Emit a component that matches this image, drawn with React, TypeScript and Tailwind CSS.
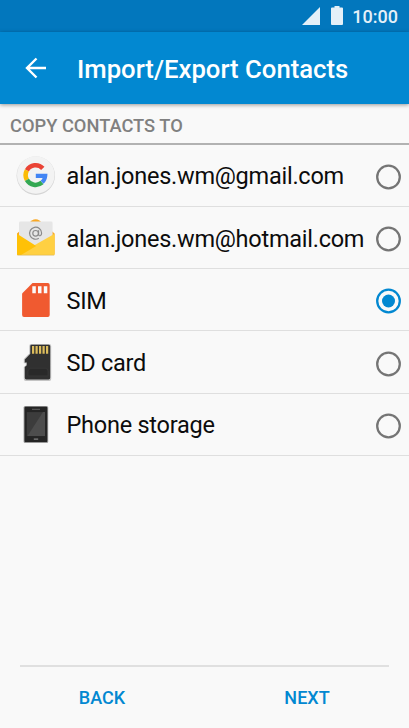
import { useState } from "react";

function GoogleIcon() {
  return (
    <svg viewBox="0 -0.5 40 40" className="size-10">
      <circle cx="19.8" cy="20.2" r="19.2" fill="#d4d4d4" />
      <circle cx="19.8" cy="19.5" r="18.8" fill="#f3f3f3" />
      <g fill="none" strokeWidth="4.6">
        <path d="M10.9 14.8A10 10 0 0 1 26.8 12.8" stroke="#ea4335" />
        <path d="M10.9 24.4A10 10 0 0 1 10.9 14.8" stroke="#fbbc05" />
        <path d="M26 27.1A10 10 0 0 1 10.9 24.4" stroke="#34a853" />
        <path d="M19.8 20.4H29.2A9.6 9.6 0 0 1 26 26.8" stroke="#4285f4" strokeWidth="4.2" />
      </g>
    </svg>
  );
}

function EmailIcon() {
  return (
    <svg viewBox="0 -0.5 40 40" className="size-10">
      <path d="M1 15L15.8 2Q19.8 -0.4 23.4 2L38.6 15V36H1Z" fill="#f9a825" />
      <path d="M3 4.4Q3 3 4.4 3H35.2Q36.6 3 36.6 4.4V27H3Z" fill="#e6e6e6" />
      <g fill="none" stroke="#8a8a8a" strokeWidth="1.2">
        <circle cx="19.6" cy="14.8" r="2.8" />
        <path d="M22.6 11.8V16.2Q23 17.8 24.6 17Q25.6 16.2 25.6 14.6A6 6 0 1 0 22.8 19.8" />
      </g>
      <path d="M38.6 15.2L1.4 36.6H37.4Q38.6 36.6 38.6 35.4Z" fill="#ffd042" />
      <path d="M1 15.2L20.2 27.6L5 36.6H2Q1 36.6 1 35.4Z" fill="#ffc107" />
      <path d="M1.4 36.7H38.2" stroke="#d9b24c" strokeWidth=".6" />
    </svg>
  );
}

function SimIcon() {
  return (
    <svg viewBox="0 0 40 40" className="size-10">
      <path
        d="M16.5 3H31.8Q33.7 3 33.7 4.9V35.1Q33.7 37 31.8 37H8Q6.1 37 6.1 35.1V13.4Z"
        fill="#f05a30"
      />
      <path d="M16.3 6.3h3.5v7h-3.5zM22 6.3h3.5v7H22zM27.8 6.3h3.5v7h-3.5z" fill="#fafafa" />
    </svg>
  );
}

function SdCardIcon() {
  return (
    <svg viewBox="0 -0.9 40 40" className="size-10">
      <path
        d="M15 1H33.2Q35.2 1 35.2 3V36Q35.2 38 33.2 38H9.8Q7.8 38 7.8 36V24L9.8 22.4V20.4H7.8V16.2L13.3 10.6V3Q13.3 1 15 1Z"
        fill="#c4c4c4"
      />
      <path
        d="M15.7 1.8H32.7Q34.2 1.8 34.2 3.3V34.8Q34.2 36.6 32.6 36.6H10.4Q8.8 36.6 8.8 34.8V24.2L10.8 22.4V19.6H8.8V16.6L14.3 10.8V3.2Q14.3 1.8 15.7 1.8Z"
        fill="#303030"
      />
      <path d="M12 28L13.8 25.4H30.6L32 28V33H12Z" fill="#292929" stroke="#3d3d3d" strokeWidth=".6" />
      <path
        d="M16 3h2.2v7.8H16zM19.5 3h2.2v7.8h-2.2zM23 3h2.2v7.8H23zM26.5 3h2.2v7.8h-2.2zM30 3h2.2v7.8H30z"
        fill="#dcbc5c"
      />
    </svg>
  );
}

function PhoneIcon() {
  return (
    <svg viewBox="0 -0.9 40 40" className="size-10">
      <rect x="7.6" y="1" width="24.6" height="37.2" rx="1.6" fill="#999" />
      <rect x="8.5" y="1.8" width="22.8" height="35.4" rx="1.2" fill="#252525" />
      <rect x="10.8" y="7.2" width="18.2" height="24" fill="#3c3c3c" />
      <path d="M29 7.2V31.2H11.5L27 7.2Z" fill="#4d4d4d" />
      <path d="M16 4.4H24" stroke="#666" strokeWidth=".9" />
      <path d="M17.8 34.2H22.2" stroke="#999" strokeWidth="1" />
    </svg>
  );
}

const destinations = [
  { id: "gmail", label: "alan.jones.wm@gmail.com", Icon: GoogleIcon },
  { id: "hotmail", label: "alan.jones.wm@hotmail.com", Icon: EmailIcon },
  { id: "sim", label: "SIM", Icon: SimIcon },
  { id: "sd", label: "SD card", Icon: SdCardIcon },
  { id: "phone", label: "Phone storage", Icon: PhoneIcon },
];

export default function App() {
  const [selected, setSelected] = useState("sim");

  return (
    <div className="flex h-[728px] w-[409px] flex-col bg-[#f9f9f9] font-['Roboto',sans-serif]">
      {/* Status bar */}
      <div className="flex h-8 shrink-0 items-center justify-end bg-[#0277bd] pr-[11px] text-[#e4f0f8]">
        <svg viewBox="0 0 18 18" className="mr-[11px] size-[18px] fill-current">
          <path d="M18 0V18H0Z" />
        </svg>
        <svg viewBox="0 0 12 19" className="mr-[9px] mb-px h-[19px] w-3 fill-current">
          <path d="M3.5 0h5v1.5H11q1 0 1 1V18q0 1-1 1H1q-1 0-1-1V2.5q0-1 1-1h2.5z" />
        </svg>
        <span className="pt-0.5 text-[18px] leading-8 font-medium">10:00</span>
      </div>

      {/* App bar */}
      <header className="relative flex h-[72px] shrink-0 items-center bg-[#0288d1] pl-[25px] text-white shadow-[0_1px_4px_rgba(0,0,0,0.4)]">
        <button aria-label="Back" className="mr-[30px]">
          <svg viewBox="0 0 22 22" className="size-[22px]" fill="none" stroke="currentColor" strokeWidth="2.4">
            <path d="M21 11H2.5M11.5 1.5L2 11L11.5 20.5" />
          </svg>
        </button>
        <h1 className="pt-0.5 text-[25.7px] font-medium whitespace-nowrap">
          Import/Export Contacts
        </h1>
      </header>

      <h2 className="h-[40.9px] shrink-0 border-b-2 border-[#b2b2b2] pl-[10px] text-[18.3px] leading-[43px] font-medium text-[#808080]">
        COPY CONTACTS TO
      </h2>

      {/* Destinations */}
      <div role="radiogroup">
        {destinations.map(({ id, label, Icon }) => (
          <button
            key={id}
            role="radio"
            aria-checked={selected === id}
            onClick={() => setSelected(id)}
            className="flex h-[62.2px] w-full items-center border-b border-[#dfdfdf] pr-[8px] pl-4 text-left"
          >
            <Icon />
            <span className="ml-[10.5px] flex-1 pt-[3px] text-[23.5px] tracking-[-0.25px] whitespace-nowrap text-[#0c0c0c]">
              {label}
            </span>
            <svg
              viewBox="0 0 26 26"
              className={`mt-[3px] size-[26px] shrink-0 ${selected === id ? "text-[#0288d1]" : "text-[#757575]"}`}
            >
              <circle cx="13.5" cy="13" r="11.3" fill="none" stroke="currentColor" strokeWidth="2.3" />
              {selected === id && <circle cx="13.5" cy="13" r="6.5" fill="currentColor" />}
            </svg>
          </button>
        ))}
      </div>

      {/* Footer */}
      <footer className="mx-5 mt-auto flex h-[63px] border-t-2 border-[#e0e0e0] text-[18px] font-medium text-[#0288d1]">
        <button className="h-full w-[164px] pb-px">BACK</button>
        <button className="ml-[41px] h-full w-[164px] pb-px">NEXT</button>
      </footer>
    </div>
  );
}
